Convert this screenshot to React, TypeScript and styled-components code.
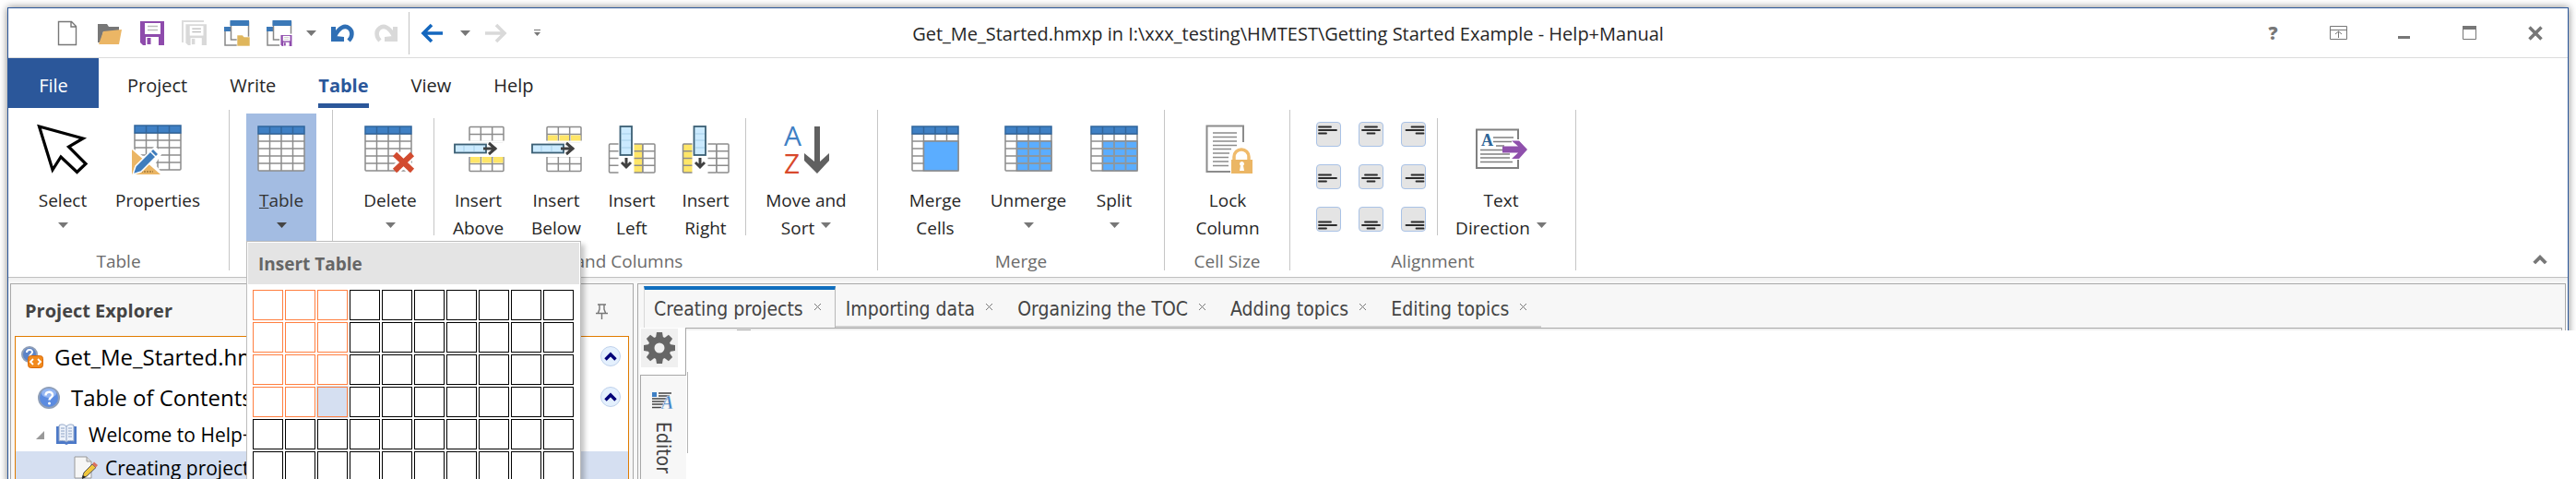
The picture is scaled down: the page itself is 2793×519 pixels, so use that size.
import React from "react";
import styled, { createGlobalStyle, css } from "styled-components";

const ui = '"Open Sans", "Noto Sans", sans-serif';
const tabFont = '"DejaVu Sans Condensed", "DejaVu Sans", sans-serif';
const blue = "#2b579a";

const GlobalStyle = createGlobalStyle`
  *, *::before, *::after { box-sizing: border-box; }
  body { margin: 0; background: #fff; overflow: hidden; }
  button { font: inherit; color: inherit; background: none; border: 0; padding: 0; margin: 0; }
  h1, h2, p, ul { margin: 0; padding: 0; font: inherit; list-style: none; }
  svg { display: block; flex: none; }
`;

const Page = styled.div`
  height: 100vh;
  padding: 8px 8px 0;
  overflow: hidden;
  font-family: ${ui};
  font-size: 19px;
  color: #262626;
`;

const Window = styled.div`
  display: flex;
  flex-direction: column;
  min-height: 100%;
  border: 1px solid ${blue};
  border-bottom: 0;
  background: #fff;
  box-shadow: 0 0 8px rgba(0, 0, 0, 0.5);
`;

/* ---------- title bar ---------- */

const TitleBar = styled.header`
  display: grid;
  grid-template-columns: 1fr auto 1fr;
  align-items: center;
  height: 54px;
  border-bottom: 1px solid #dcdcdc;
`;

const QuickAccess = styled.div`
  display: flex;
  align-items: center;
  height: 100%;
  padding-left: 41px;
`;

const QuickButton = styled.button<{ $w?: number }>`
  display: flex;
  align-items: center;
  justify-content: center;
  width: ${(p) => p.$w ?? 46}px;
  height: 46px;
`;

const QuickDivider = styled.span`
  width: 1px;
  height: 46px;
  margin-left: 2px;
  background: #c3c3c3;
`;

const WindowTitle = styled.h1`
  font-size: 20px;
  line-height: 26px;
  color: #262626;
  padding-top: 2px;
`;

const WindowControls = styled.div`
  display: flex;
  justify-content: flex-end;
`;

const ControlButton = styled.button`
  display: flex;
  align-items: center;
  justify-content: center;
  width: 71px;
  height: 52px;
  font-size: 20px;
  font-weight: 800;
  color: #777;
`;

/* ---------- ribbon tabs ---------- */

const RibbonTabs = styled.nav`
  display: flex;
  height: 54px;
  font-size: 20px;
`;

const FileTab = styled.button`
  width: 98px;
  padding-top: 6px;
  margin-right: 8px;
  line-height: 48px;
  color: #fff;
  background: ${blue};
`;

const RibbonTab = styled.button<{ $active?: boolean }>`
  padding: 11px 0 0;
  margin: 0 23px;
  line-height: 38px;
  border-bottom: 5px solid transparent;
  ${(p) =>
    p.$active &&
    css`
      color: ${blue};
      font-weight: 700;
      border-bottom-color: ${blue};
    `}
`;

/* ---------- ribbon ---------- */

const Ribbon = styled.section`
  display: flex;
  padding: 2px 0 7px;
  border-bottom: 1px solid #c0c0c0;
`;

const Group = styled.div<{ $l?: number; $r?: number }>`
  display: flex;
  flex-direction: column;
  height: 174px;
  padding-top: 4px;
  border-right: 1px solid #c6c6c6;
  & > div {
    padding-left: ${(p) => p.$l ?? 16}px;
    padding-right: ${(p) => p.$r ?? 16}px;
  }
`;

const GroupBody = styled.div`
  display: flex;
  height: 139px;
`;

const GroupLabel = styled.p`
  margin-top: 11px;
  line-height: 20px;
  text-align: center;
  color: #6b6b6b;
`;

const Divider = styled.span<{ $before?: number }>`
  width: 1px;
  margin: 5px 0 7px ${(p) => p.$before ?? 0}px;
  background: #c6c6c6;
`;

const BigButton = styled.button<{ $w: number; $open?: boolean }>`
  display: flex;
  flex-direction: column;
  align-items: center;
  width: ${(p) => p.$w}px;
  padding-top: 9px;
  height: 139px;
  background: ${(p) => (p.$open ? "#a3bce2" : "transparent")};
  color: ${(p) => (p.$open ? "#333" : "#262626")};
`;

const Caption = styled.span`
  margin-top: 12px;
  line-height: 30px;
  white-space: nowrap;
`;

const SecondLine = styled.span`
  display: flex;
  gap: 7px;
  height: 30px;
  line-height: 30px;
  & > svg { margin-top: 9px; }
`;

const MenuAnchor = styled.div`
  position: relative;
`;

const AlignGrid = styled.div`
  display: grid;
  grid-template-columns: repeat(3, 27px);
  grid-auto-rows: 27px;
  gap: 19px;
  margin: 9px 12px 0 28px;
`;

const AlignButton = styled.button`
  display: block;
  border: 1px solid #a9c2e6;
  border-radius: 4px;
  background: #e4e4e4;
`;

const CollapseButton = styled.button`
  align-self: flex-end;
  margin: 0 20px 3px auto;
  width: 18px;
  height: 18px;
`;

/* ---------- insert table menu ---------- */

const TableMenu = styled.div`
  position: absolute;
  z-index: 5;
  top: calc(100% - 1px);
  left: 0;
  padding: 1px;
  border: 1px solid #bdbdbd;
  background: #fff;
  box-shadow: 4px 4px 5px rgba(0, 0, 0, 0.22);
`;

const TableMenuTitle = styled.h2`
  height: 45px;
  padding-left: 11px;
  font-weight: 700;
  line-height: 46px;
  color: #666;
  background: #e4e4e4;
`;

const SizePicker = styled.div`
  display: grid;
  grid-template-columns: repeat(10, 33px);
  grid-auto-rows: 33px;
  gap: 2px;
  padding: 6px 6px 6px 5px;
`;

const SizeCell = styled.button<{ $on: boolean; $hover: boolean }>`
  border: 1px solid ${(p) => (p.$on ? "#ff7f40" : "#000")};
  background: ${(p) => (p.$hover ? "#d5dff1" : "#fff")};
  box-shadow: ${(p) => (p.$hover ? "0 0 0 1px #d5dff1" : "none")};
`;

/* ---------- workspace ---------- */

const Workspace = styled.main`
  display: flex;
  flex: 1;
  gap: 4px;
  padding: 6px 2px 0;
  background: linear-gradient(#eeeeee, #f8f8f8 5px);
`;

const Explorer = styled.aside`
  display: flex;
  flex-direction: column;
  flex: none;
  width: 676px;
  padding: 0 4px;
  border: 1px solid #a8a8a8;
  border-bottom: 0;
  background: #f7f7f7;
`;

const ExplorerHeader = styled.div`
  display: flex;
  align-items: center;
  justify-content: space-between;
  height: 56px;
  padding: 2px 23px 0 11px;
`;

const ExplorerTitle = styled.h2`
  font-size: 20px;
  font-weight: 700;
  line-height: 26px;
  color: #444;
`;

const Tree = styled.ul`
  flex: 1;
  border: 1px solid #e07b00;
  border-bottom: 0;
  background: #fff;
  color: #000;
`;

const TreeRow = styled.li<{ $indent: number; $large?: boolean; $selected?: boolean }>`
  display: flex;
  align-items: center;
  height: ${(p) => (p.$large ? 44 : 36)}px;
  gap: ${(p) => (p.$selected ? 8 : 12)}px;
  padding: 0 8px 0 ${(p) => p.$indent}px;
  font-size: ${(p) => (p.$large ? 24 : 21)}px;
  line-height: 30px;
  white-space: nowrap;
  background: ${(p) => (p.$selected ? "#d5dff1" : "transparent")};
`;

const RoundButton = styled.button`
  display: flex;
  align-items: center;
  justify-content: center;
  width: 22px;
  height: 22px;
  margin: 0 0 3px auto;
  border: 1px solid #c0d2ec;
  border-radius: 50%;
  background: #e4f0fd;
`;

const Documents = styled.section`
  display: flex;
  flex-direction: column;
  flex: 1;
  min-width: 0;
  border: 1px solid #a8a8a8;
  border-bottom: 0;
  background: #f7f7f7;
`;

const DocTabs = styled.div`
  display: flex;
  height: 47px;
  padding: 2px 0 0 6px;
`;

const DocTab = styled.div<{ $active?: boolean }>`
  display: flex;
  align-items: center;
  gap: 12px;
  padding: 6px 16px 0 11px;
  font-family: ${tabFont};
  font-size: 21px;
  line-height: 24px;
  color: #444;
  border-bottom: 2px solid #d0d0d0;
  ${(p) =>
    p.$active &&
    css`
      padding: 0 15px 0 10px;
      border-top: 4px solid #106ebe;
      border-left: 1px solid #d8d8d8;
      border-right: 1px solid #b8b8b8;
      border-bottom: 0;
    `}
`;

const CloseTab = styled.button`
  width: 7px;
  height: 7px;
  margin-bottom: 4px;
`;

const DocBody = styled.div`
  display: flex;
  flex: 1;
  padding-left: 2px;
`;

const Gutter = styled.div`
  display: flex;
  flex-direction: column;
  flex: none;
  width: 50px;
`;

const GearCell = styled.div`
  height: 52px;
  padding: 1px;
  border-right: 1px solid #a8a8a8;
  border-bottom: 1px solid #a8a8a8;
  background: #fff;
`;

const GearButton = styled.button`
  display: flex;
  align-items: center;
  justify-content: center;
  width: 40px;
  height: 42px;
  background: #f0f0f0;
`;

const EditorTab = styled.button`
  display: flex;
  flex: 1;
  flex-direction: column;
  align-items: center;
  gap: 14px;
  padding: 18px 1px 0 0;
  border-left: 1px solid #a8a8a8;
  background: #f7f7f7;
  color: #444;
  font-family: ${tabFont};
  font-size: 21px;
`;

const Sideways = styled.span`
  writing-mode: vertical-rl;
  line-height: 24px;
`;

const DocArea = styled.div`
  display: flex;
  flex-direction: column;
  flex: 1;
`;

const DocFrame = styled.div`
  height: 3px;
  margin-right: 3px;
  padding: 1px 0 0 55px;
  border-top: 1px solid #a8a8a8;
  border-right: 1px solid #a8a8a8;
  background: #f0f0f0;
`;

const FrameMark = styled.span`
  display: block;
  width: 15px;
  height: 1px;
  background: #a8a8a8;
`;

/* Blank sheet running over the window edge on the right. */
const Sheet = styled.div`
  position: relative;
  z-index: 1;
  flex: 1;
  margin-right: -14px;
  padding: 45px 0 0 1px;
  background: #fff;
`;

const SheetRule = styled.span`
  display: block;
  width: 1px;
  height: 88px;
  background: #b4b4b4;
`;

/* ---------- drawings ---------- */

const Arrow = ({ color = "#777" }: { color?: string }) => (
  <svg width="11" height="6" viewBox="0 0 11 6"><path d="M0 0h11L5.500 6z" fill={color} /></svg>
);

const Big = ({ children }: { children: React.ReactNode }) => (
  <svg width="58" height="58" viewBox="0 0 58 58" fill="none">{children}</svg>
);

const Cells = ({ x, y, w, h, cols, rows, fill = "#fff" }: {
  x: number; y: number; w: number; h: number; cols: number; rows: number; fill?: string;
}) => (
  <g stroke="#8c8c8c" strokeWidth="1.5">
    <rect x={x} y={y} width={w} height={h} fill={fill} rx="1" />
    {Array.from({ length: cols - 1 }, (_, i) => (
      <path key={"c" + i} d={`M${x + ((i + 1) * w) / cols} ${y}v${h}`} />
    ))}
    {Array.from({ length: rows - 1 }, (_, i) => (
      <path key={"r" + i} d={`M${x} ${y + ((i + 1) * h) / rows}h${w}`} />
    ))}
  </g>
);

const TableShape = ({ x = 4, y = 5 }: { x?: number; y?: number }) => (
  <g>
    <Cells x={x} y={y + 8} w={50} h={40} cols={4} rows={5} />
    <rect x={x} y={y} width="50" height="8" fill="#3f80c4" stroke="#31659c" strokeWidth="1.500" />
    <path d={`M${x + 12.5} ${y}v8M${x + 25} ${y}v8M${x + 37.5} ${y}v8`} stroke="#31659c" strokeWidth="1.500" />
  </g>
);

const CursorIcon = () => (
  <Big><path d="M3.500 5L51 18 35.500 27 54 45.500 44.500 54.500 27 38 18 52z" stroke="#000" strokeWidth="3.200" fill="#fff" /></Big>
);

const TablePropsIcon = () => (
  <Big>
    <TableShape y={4} />
    <path d="M0 27v31h36L26 46l8-12-8-8-12 12z" fill="#fff" />
    <path d="M1 30v27h31z" fill="#ebb665" />
    <path d="M8 54h16" stroke="#b58a45" strokeWidth="2" strokeDasharray="2 1" />
    <path d="M2 57l3-9L21 32l6 6-16 16z" fill="#3f7dbd" stroke="#fff" strokeWidth="1.500" />
    <path d="M22 32l2-2 5 5-2 2z" fill="#3f7dbd" />
  </Big>
);

const DeleteTableIcon = () => (
  <Big>
    <TableShape x={2} y={5} />
    <path d="M36 36l15 15M51 36L36 51" stroke="#fff" strokeWidth="11" />
    <path d="M34 35l19 18M53 35L34 53" stroke="#d24b2f" strokeWidth="6" />
  </Big>
);

const InsertRowIcon = ({ below }: { below?: boolean }) => (
  <Big>
    <Cells x={19} y={5.5} w={37} h={16} cols={3} rows={2} />
    <Cells x={19} y={37.5} w={37} h={16} cols={3} rows={2} />
    {[20, 32.5, 45].map((x) => (
      <rect key={x} x={x} y={below ? 14.5 : 38} width="10.500" height="6.500" fill="#ffe668" />
    ))}
    <path d="M17 21.500h41M17 37h41" stroke="#fff" strokeWidth="2" />
    <rect x="3" y="24.500" width="34" height="9" fill="#cbeaff" stroke="#3b5f74" strokeWidth="1.800" />
    <path d="M13 26v6M24 26v6" stroke="#a5cfe8" />
    <path d="M34 29h14M40 23l7 6-7 6" stroke="#404040" strokeWidth="3" />
  </Big>
);

const InsertColumnIcon = ({ right }: { right?: boolean }) => (
  <Big>
    <Cells x={4.500} y={24} w={12} h={31} cols={1} rows={4} fill={right ? "#ffe668" : "#fff"} />
    <Cells x={29} y={24} w={12} h={31} cols={1} rows={4} fill={right ? "#fff" : "#ffe668"} />
    <Cells x={41} y={24} w={13} h={31} cols={1} rows={4} />
    <path d="M14.500 22h17v35h-17z" fill="#fff" />
    <rect x="16.500" y="5" width="12.500" height="31" fill="#cbeaff" stroke="#3b5f74" strokeWidth="1.800" />
    <path d="M18 13h10M18 20h10M18 28h10" stroke="#a5cfe8" />
    <path d="M23 39v10M18 44l5 5 5-5" stroke="#404040" strokeWidth="3" />
  </Big>
);

const SortIcon = () => (
  <Big>
    <text x="5" y="26" fontFamily="Open Sans" fontSize="30" fill="#3f80c4">A</text>
    <text x="5" y="56" fontFamily="Open Sans" fontSize="30" fill="#d8492c">Z</text>
    <path d="M38 5h6v38l10-9v8L41 56 27 42v-8l11 9z" fill="#606060" />
  </Big>
);

const MergeIcon = ({ split }: { split?: boolean }) => (
  <Big>
    <TableShape />
    <rect x="16.500" y="21" width="37.500" height="32" fill="#5badff" stroke="#8c8c8c" strokeWidth="1.500" />
    {split && <path d="M29 21v32M41.500 21v32M16 29h38M16 37h38M16 45h38" stroke="#8c979f" strokeWidth="1.800" />}
  </Big>
);

const LockColumnIcon = () => (
  <Big>
    <path d="M46 22V4.500H6.500V54H32" stroke="#8c8c8c" strokeWidth="2" />
    <path d="M13 12h26M13 16.500h26M13 21h26M13 25.500h26M13 29.500h20M13 34h18M13 38.500h17M13 43h17M13 47.500h17" stroke="#8c8c8c" strokeWidth="1.600" />
    <path d="M36 42v-4a8 8 0 0 1 16 0v4" stroke="#f0bb6c" strokeWidth="3.500" />
    <rect x="33" y="41" width="23" height="15" fill="#ebb665" />
    <path d="M44.500 43a2.500 2.500 0 0 1 1.500 4.500l1 5.500h-5l1-5.500a2.500 2.500 0 0 1 1.500-4.500z" fill="#fff" />
  </Big>
);

const TextDirectionIcon = () => (
  <Big>
    <path d="M47 19V8.500H2V50h45v-9" stroke="#808080" strokeWidth="2" />
    <path d="M20 17h22M20 21.500h20M23 26h9M6 30.500h24M6 35h32M6 39h32M6 43.500h35" stroke="#808080" strokeWidth="1.600" />
    <text x="7" y="26" fontFamily="Liberation Serif" fontSize="18" fontWeight="700" fill="#2e6496">A</text>
    <path d="M30 26.500h17l-7-6h8l9 9.500-9 10h-8l7-6.500H30z" fill="#8f50ac" />
  </Big>
);

const AlignLines = ({ h, v }: { h: number; v: number }) => {
  const top = [4.5, 10.5, 15.5][v];
  const x = (w: number) => [2, 12.5 - w / 2, 23.5 - w][h];
  return (
    <svg width="25" height="25" viewBox="0 0 25 25" stroke="#2b2b2b" strokeLinecap="round">
      <path d={`M${x(13)} ${top}h13`} strokeWidth="1.800" />
      <path d={`M${x(19)} ${top + 3.5}h19`} strokeWidth="1.800" />
      <path d={`M${x(8)} ${top + 7}h8`} strokeWidth="1.800" />
    </svg>
  );
};

const Small = ({ children }: { children: React.ReactNode }) => (
  <svg width="28" height="28" viewBox="0 0 28 28" fill="none">{children}</svg>
);

const NewIcon = () => (
  <Small><path d="M4.500 1.500h14l5 5v20h-19zM18 2v5h5" stroke="#777" strokeWidth="1.400" fill="#fff" /></Small>
);
const OpenIcon = () => (
  <Small>
    <path d="M1 24V4h10l2 3h11v5H7L4 24z" fill="#777" />
    <path d="M7 12l20-2-3 16H2z" fill="#ebb665" />
  </Small>
);
const Disk = ({ color, paper = "#fff" }: { color: string; paper?: string }) => (
  <g>
    <path d="M1 1h26v26H4l-3-3z" fill={color} />
    <rect x="6" y="3" width="17" height="12" fill={paper} />
    <path d="M9 6.500h11M9 10.500h11" stroke="#bbb" strokeWidth="1.500" />
    <rect x="7" y="18" width="14" height="9" fill={paper} />
    <rect x="8.500" y="19" width="4" height="7" fill={color} />
  </g>
);
const SaveIcon = () => <Small><Disk color="#8e4bac" /></Small>;
const SaveAllIcon = () => (
  <Small>
    <path d="M1 24V1h23" stroke="#dcdcdc" strokeWidth="2" />
    <g transform="translate(3.500 3.500) scale(.87)"><Disk color="#d9d9d9" /></g>
  </Small>
);
const Windows = () => (
  <g>
    <rect x="1" y="9" width="15" height="18" fill="#fff" stroke="#888" strokeWidth="1.500" />
    <path d="M0 7h8v5H0z" fill="#3b79b8" />
    <rect x="7.500" y="2" width="19" height="19" fill="#fff" stroke="#888" strokeWidth="1.500" />
    <path d="M6.500 0H27v6H6.500z" fill="#3b79b8" />
  </g>
);
const OpenProjectIcon = () => (
  <Small><Windows /><path d="M14 16h6l1.500 2H28v10H14z" fill="#dfb65c" stroke="#fff" strokeWidth=".6" /></Small>
);
const SaveProjectIcon = () => (
  <Small><Windows /><g transform="translate(15 15.500) scale(.46)"><path d="M-2-2h32v32H-2z" fill="#fff" /><Disk color="#8e4bac" /></g></Small>
);
const UndoIcon = ({ redo }: { redo?: boolean }) => (
  <Small>
    <g transform={redo ? "translate(28 0) scale(-1 1)" : undefined}>
      <path d="M5 17C10 7 16 5 20.500 8.500S24 18 20 22" stroke={redo ? "#d9d9d9" : "#2f6fb5"} strokeWidth="4.500" />
      <path d="M1 7h5v10l9 1v5H1z" fill={redo ? "#d9d9d9" : "#2f6fb5"} />
    </g>
  </Small>
);
const NavIcon = ({ forward }: { forward?: boolean }) => (
  <Small>
    <g transform={forward ? "translate(28 0) scale(-1 1)" : undefined} stroke={forward ? "#d9d9d9" : "#1467be"}>
      <path d="M26 14H5M14 5l-9 9 9 9" strokeWidth="3.600" />
    </g>
  </Small>
);

const Chevron = ({ color = "#777", w = 14 }: { color?: string; w?: number }) => (
  <svg width={w} height={w} viewBox="0 0 14 14"><path d="M1.500 10.500L7 5l5.500 5.500" fill="none" stroke={color} strokeWidth="3.400" /></svg>
);

const HelpBall = () => (
  <svg width="24" height="24" viewBox="0 0 24 24">
    <circle cx="12" cy="12" r="11" fill="#5b8be0" stroke="#8f9fb8" strokeWidth="2" />
    <ellipse cx="12" cy="7" rx="8" ry="5" fill="#94b6f2" />
    <path d="M8.500 9.500c0-5 7.500-5 7.500-.5 0 3-3.500 2.500-3.500 5.500" fill="none" stroke="#fff" strokeWidth="2.400" />
    <circle cx="12.500" cy="18" r="1.500" fill="#fff" />
  </svg>
);
const ProjectIcon = () => (
  <svg width="24" height="24" viewBox="0 0 24 24">
    <circle cx="9" cy="9" r="8" fill="#5b83c8" stroke="#8f9fb8" strokeWidth="2" />
    <path d="M6 7c0-4 6-4 6-.5C12 9 9 8.500 9 11.500" fill="none" stroke="#fff" strokeWidth="2" />
    <rect x="7.500" y="10.500" width="16" height="13" rx="3" fill="#f28a1c" stroke="#d9690a" />
    <path d="M13 14l-3 3 3 3M18 14l3 3-3 3" fill="none" stroke="#fff" strokeWidth="1.800" />
  </svg>
);
const BookIcon = () => (
  <svg width="24" height="24" viewBox="0 0 24 24">
    <path d="M1 3h3v16h7l1 1 1-1h7V3h3v19H14l-2 1-2-1H1z" fill="#4c79c8" />
    <path d="M4 2c3-2 6-1 8 1 2-2 5-3 8-1v17c-3-1-6-1-8 1-2-2-5-2-8-1z" fill="#eef3fb" stroke="#8aa0c4" />
    <path d="M12 3v17M6 5h4M6 8h4M6 11h4M6 14h4M14 5h4M14 8h4M14 11h4M14 14h4" stroke="#8aa0c4" />
  </svg>
);
const TopicIcon = () => (
  <svg width="26" height="26" viewBox="0 0 26 26">
    <path d="M1 1h13l5 5v18H1z" fill="#f6f6f6" stroke="#999" />
    <path d="M14 1v5h5" fill="#ddd" stroke="#999" />
    <path d="M9 24l2-6L20 9l4 3.500L14 22z" fill="#f0c63c" stroke="#555" />
    <path d="M20 9l2-2.500 4 3.500-2 2.500z" fill="#d9705f" />
    <path d="M9 25l1-4 3 2z" fill="#222" />
  </svg>
);
const PinIcon = () => (
  <svg width="13" height="17" viewBox="0 0 13 17" fill="none" stroke="#777" strokeWidth="1.400">
    <path d="M2 1h9M4 1v5l-1.500 4M9 1v5l1.500 4M0 10.500h13M6.500 10v7" />
  </svg>
);
const GearIcon = () => (
  <svg width="34" height="34" viewBox="-17 -17 34 34">
    {Array.from({ length: 8 }, (_, i) => (
      <path key={i} d="M-4-11l1-6h6L4-11z" fill="#666" transform={`rotate(${i * 45})`} />
    ))}
    <circle r="9" fill="none" stroke="#666" strokeWidth="7" />
  </svg>
);
const EditorIcon = () => (
  <svg width="24" height="18" viewBox="0 0 24 18">
    <path d="M0 0h5v5H0z" fill="#3f80c4" />
    <path d="M7 1h14M7 4h12M0 7h17M0 10h14M0 13h12M0 16.500h10" stroke="#444" strokeWidth="1.500" />
    <text x="10" y="18" fontFamily="Liberation Serif" fontStyle="italic" fontWeight="700" fontSize="20" fill="#3f80c4" stroke="#f7f7f7" strokeWidth=".4">A</text>
  </svg>
);

/* ---------- page ---------- */

const docs = ["Creating projects", "Importing data", "Organizing the TOC", "Adding topics", "Editing topics"];
const tabs = ["Project", "Write", "Table", "View", "Help"];
const levels = ["top", "middle", "bottom"];
const sides = ["left", "center", "right"];

type CommandProps = { w: number; icon: React.ReactNode; line1: React.ReactNode; line2?: string; menu?: boolean; open?: boolean };

const Command = ({ w, icon, line1, line2, menu, open }: CommandProps) => (
  <BigButton $w={w} $open={open} aria-expanded={menu ? !!open : undefined}>
    {icon}
    <Caption>{line1}</Caption>
    <SecondLine>
      {line2 && <span>{line2}</span>}
      {menu && <Arrow color={open ? "#444" : "#777"} />}
    </SecondLine>
  </BigButton>
);

export default function App() {
  return (
    <Page>
      <GlobalStyle />
      <Window>
        <TitleBar>
          <QuickAccess>
            <QuickButton aria-label="New"><NewIcon /></QuickButton>
            <QuickButton aria-label="Open"><OpenIcon /></QuickButton>
            <QuickButton aria-label="Save"><SaveIcon /></QuickButton>
            <QuickButton aria-label="Save all"><SaveAllIcon /></QuickButton>
            <QuickButton aria-label="Open project"><OpenProjectIcon /></QuickButton>
            <QuickButton aria-label="Save project"><SaveProjectIcon /></QuickButton>
            <QuickButton aria-label="Save options" $w={23}><Arrow /></QuickButton>
            <QuickButton aria-label="Undo"><UndoIcon /></QuickButton>
            <QuickButton aria-label="Redo"><UndoIcon redo /></QuickButton>
            <QuickDivider />
            <QuickButton aria-label="Back" $w={48}><NavIcon /></QuickButton>
            <QuickButton aria-label="History" $w={24}><Arrow /></QuickButton>
            <QuickButton aria-label="Forward" $w={44}><NavIcon forward /></QuickButton>
            <QuickButton aria-label="Customize" $w={44}>
              <svg width="7" height="7" viewBox="0 0 7 7"><path d="M0 0h7v1H0zM0 3h7L3.500 7z" fill="#777" /></svg>
            </QuickButton>
          </QuickAccess>
          <WindowTitle>Get_Me_Started.hmxp in I:\xxx_testing\HMTEST\Getting Started Example - Help+Manual</WindowTitle>
          <WindowControls>
            <ControlButton aria-label="Help">?</ControlButton>
            <ControlButton aria-label="Ribbon display">
              <svg width="19" height="15" viewBox="0 0 19 15" fill="none" stroke="#777"><path d="M.5.500h18v14H.5zM.5 4.500h18M9.500 13V6M6 9l3.500-3L13 9" /></svg>
            </ControlButton>
            <ControlButton aria-label="Minimize">
              <svg width="13" height="13" viewBox="0 0 13 13"><path d="M0 10h13v3H0z" fill="#777" /></svg>
            </ControlButton>
            <ControlButton aria-label="Maximize">
              <svg width="15" height="15" viewBox="0 0 15 15"><path d="M.5.500h14v14H.5z" fill="none" stroke="#777" /><path d="M0 0h15v4H0z" fill="#777" /></svg>
            </ControlButton>
            <ControlButton aria-label="Close">
              <svg width="16" height="16" viewBox="0 0 16 16"><path d="M1.500 1.500l13 13M14.500 1.500l-13 13" stroke="#777" strokeWidth="3.500" /></svg>
            </ControlButton>
          </WindowControls>
        </TitleBar>

        <RibbonTabs>
          <FileTab>File</FileTab>
          {tabs.map((t) => <RibbonTab key={t} $active={t === "Table"}>{t}</RibbonTab>)}
        </RibbonTabs>

        <Ribbon>
          <Group $l={20} $r={13}>
            <GroupBody>
              <Command w={78} icon={<CursorIcon />} line1="Select" menu />
              <Command w={128} icon={<TablePropsIcon />} line1="Properties" />
            </GroupBody>
            <GroupLabel>Table</GroupLabel>
          </Group>
          <Group $l={18} $r={17}>
            <GroupBody>
              <MenuAnchor>
                <Command w={76} icon={<Big><TableShape /></Big>} line1={<><u>T</u>able</>} menu open />
                <TableMenu>
                  <TableMenuTitle>Insert Table</TableMenuTitle>
                  <SizePicker>
                    {Array.from({ length: 80 }, (_, i) => {
                      const row = Math.floor(i / 10);
                      const col = i % 10;
                      return (
                        <SizeCell
                          key={i}
                          aria-label={`${col + 1} by ${row + 1}`}
                          $on={row < 4 && col < 3}
                          $hover={row === 3 && col === 2}
                        />
                      );
                    })}
                  </SizePicker>
                </TableMenu>
              </MenuAnchor>
            </GroupBody>
          </Group>
          <Group $l={15} $r={12}>
            <GroupBody>
              <Command w={94} icon={<DeleteTableIcon />} line1="Delete" menu />
              <Divider />
              <Command w={95} icon={<InsertRowIcon />} line1="Insert" line2="Above" />
              <Command w={74} icon={<InsertRowIcon below />} line1="Insert" line2="Below" />
              <Command w={90} icon={<InsertColumnIcon />} line1="Insert" line2="Left" />
              <Command w={70} icon={<InsertColumnIcon right />} line1="Insert" line2="Right" />
              <Divider $before={8} />
              <Command w={130} icon={<SortIcon />} line1="Move and" line2="Sort" menu />
            </GroupBody>
            <GroupLabel>Rows and Columns</GroupLabel>
          </Group>
          <Group $l={17} $r={17}>
            <GroupBody>
              <Command w={90} icon={<MergeIcon />} line1="Merge" line2="Cells" />
              <Command w={112} icon={<MergeIcon split />} line1="Unmerge" menu />
              <Command w={74} icon={<MergeIcon split />} line1="Split" menu />
            </GroupBody>
            <GroupLabel>Merge</GroupLabel>
          </Group>
          <Group $l={18} $r={17}>
            <GroupBody>
              <Command w={100} icon={<LockColumnIcon />} line1="Lock" line2="Column" />
            </GroupBody>
            <GroupLabel>Cell Size</GroupLabel>
          </Group>
          <Group $l={0} $r={12}>
            <GroupBody>
              <AlignGrid>
                {levels.flatMap((v, vi) =>
                  sides.map((h, hi) => (
                    <AlignButton key={v + h} aria-label={`Align ${v} ${h}`}><AlignLines h={hi} v={vi} /></AlignButton>
                  )),
                )}
              </AlignGrid>
              <Divider />
              <Command w={137} icon={<TextDirectionIcon />} line1="Text" line2="Direction" menu />
            </GroupBody>
            <GroupLabel>Alignment</GroupLabel>
          </Group>
          <CollapseButton aria-label="Collapse ribbon"><Chevron w={16} /></CollapseButton>
        </Ribbon>

        <Workspace>
          <Explorer>
            <ExplorerHeader>
              <ExplorerTitle>Project Explorer</ExplorerTitle>
              <button aria-label="Pin"><PinIcon /></button>
            </ExplorerHeader>
            <Tree>
              <TreeRow $indent={6} $large>
                <ProjectIcon />
                <span>Get_Me_Started.hmxp</span>
                <RoundButton aria-label="Collapse project"><Chevron color="#000078" /></RoundButton>
              </TreeRow>
              <TreeRow $indent={24} $large>
                <HelpBall />
                <span>Table of Contents</span>
                <RoundButton aria-label="Collapse contents"><Chevron color="#000078" /></RoundButton>
              </TreeRow>
              <TreeRow $indent={22}>
                <svg width="9" height="9" viewBox="0 0 9 9"><path d="M9 0v9H0z" fill="#999" /></svg>
                <BookIcon />
                <span>Welcome to Help+Manual</span>
              </TreeRow>
              <TreeRow $indent={63} $selected>
                <TopicIcon />
                <span>Creating projects</span>
              </TreeRow>
            </Tree>
          </Explorer>

          <Documents>
            <DocTabs>
              {docs.map((d, i) => (
                <DocTab key={d} $active={i === 0}>
                  <span>{d}</span>
                  <CloseTab aria-label={`Close ${d}`}>
                    <svg width="7" height="7" viewBox="0 0 7 7"><path d="M0 0l7 7M7 0L0 7" stroke="#777" /></svg>
                  </CloseTab>
                </DocTab>
              ))}
            </DocTabs>
            <DocBody>
              <Gutter>
                <GearCell>
                  <GearButton aria-label="Settings"><GearIcon /></GearButton>
                </GearCell>
                <EditorTab><EditorIcon /><Sideways>Editor</Sideways></EditorTab>
              </Gutter>
              <DocArea>
                <DocFrame><FrameMark /></DocFrame>
                <Sheet><SheetRule /></Sheet>
              </DocArea>
            </DocBody>
          </Documents>
        </Workspace>
      </Window>
    </Page>
  );
}
